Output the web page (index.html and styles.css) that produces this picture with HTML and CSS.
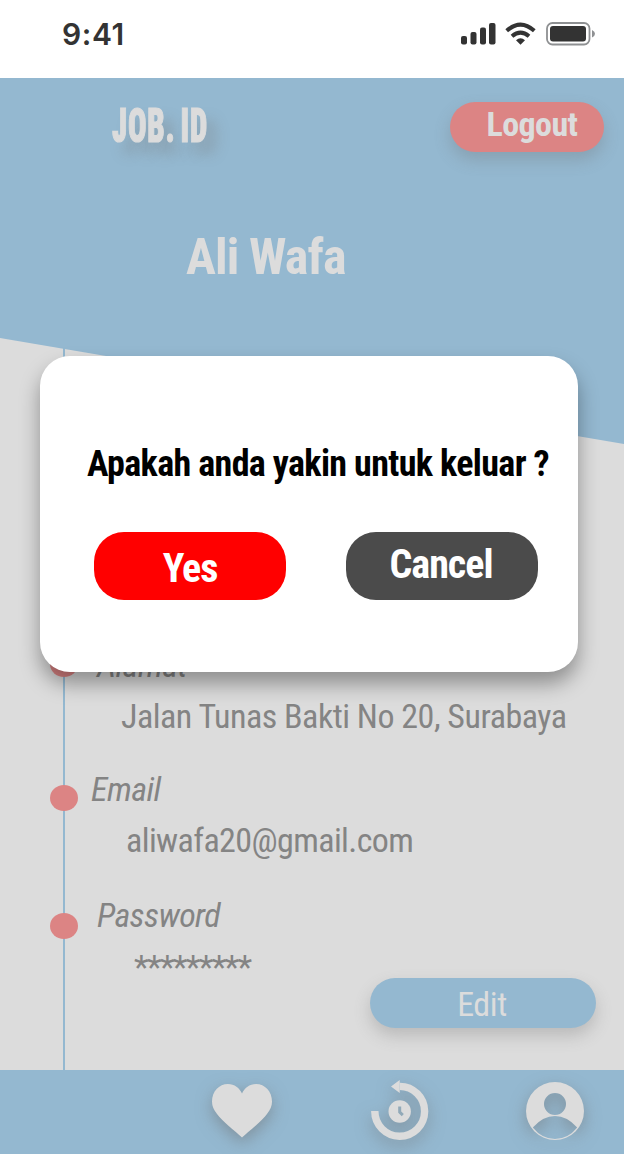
FILE: index.html
```html
<!DOCTYPE html>
<html lang="id">
<head>
<meta charset="utf-8">
<title>JOB.ID</title>
<link rel="stylesheet" href="styles.css">
</head>
<body>
<div class="phone">
  <div class="status">
    <span class="clock">9:41</span>
    <svg class="status-icons" width="136" height="24" viewBox="0 0 136 24">
      <g fill="#333">
        <rect x="1" y="14" width="6" height="8.500" rx="2"/>
        <rect x="10.500" y="10" width="6" height="12.500" rx="2"/>
        <rect x="20" y="5.500" width="6" height="17" rx="2"/>
        <rect x="29" y="1" width="6.500" height="21.500" rx="2"/>
        <path d="M60.500 22.800L56 18.200Q60.500 14.200 65 18.200Z"/>
        <rect x="90" y="4" width="36" height="15.500" rx="3"/>
      </g>
      <g fill="none" stroke="#333" stroke-width="4">
        <path d="M46.700 8.800Q60.500-3.500 74.300 8.800"/>
        <path d="M52 14.300Q60.500 7 69 14.300"/>
      </g>
      <rect x="87" y="1" width="42.500" height="21.500" rx="5.500" fill="none" stroke="#8e9092" stroke-width="1.800"/>
      <path d="M132 8Q135 9.500 135 11.800T132 15.500Z" fill="#8e9092"/>
    </svg>
  </div>

  <main class="profile">
    <header class="hero">
      <div class="hero-bar">
        <span class="logo"><span class="logo-text">JOB. ID</span></span>
        <button class="btn logout">Logout</button>
      </div>
      <h1 class="name">Ali Wafa</h1>
    </header>

    <dl class="timeline">
      <div class="item address"><dt>Alamat</dt><dd>Jalan Tunas Bakti No 20, Surabaya</dd></div>
      <div class="item email"><dt>Email</dt><dd>aliwafa20@gmail.com</dd></div>
      <div class="item password"><dt>Password</dt><dd>*********</dd></div>
    </dl>
    <div class="actions"><button class="btn edit">Edit</button></div>
  </main>

  <nav class="tabs">
    <svg class="tab" width="60" height="54" viewBox="0 0 60 54"><path fill="#dcdcdc" d="M30 53.500C22 46 11 38 5 30C1.500 25.500 0 22 0 17.500C0 7.500 7 0 16 0C22.500 0 27.500 4 30 9.500C32.500 4 37.500 0 44 0C53 0 60 7.500 60 17.500C60 22 58.500 25.500 55 30C49 38 38 46 30 53.500Z"/></svg>
    <svg class="tab" width="58" height="60" viewBox="0 0 58 60">
      <path d="M3.800 31A24.900 24.900 0 1 0 28.700 6.400" fill="none" stroke="#dcdcdc" stroke-width="7.400"/>
      <path d="M20 6.500L28.700 0V13Z" fill="#dcdcdc"/>
      <circle cx="28.700" cy="31.500" r="11.200" fill="#dcdcdc"/>
      <path d="M28.700 26.500V32.200L31.800 35.200" fill="none" stroke="#91a9b8" stroke-width="3"/>
    </svg>
    <svg class="tab" width="58" height="58" viewBox="0 0 58 58"><path fill="#dcdcdc" fill-rule="evenodd" d="M29 0A29 29 0 1 1 29 58A29 29 0 1 1 29 0ZM29 11A11 11 0 1 0 29 33A11 11 0 1 0 29 11ZM6.800 45.500Q17 34 29 34T51.200 45.500Q42 57 29 57T6.800 45.500Z"/></svg>
  </nav>

  <div class="dialog" role="dialog">
    <p class="question">Apakah anda yakin untuk keluar ?</p>
    <div class="choices">
      <button class="btn choice yes">Yes</button>
      <button class="btn choice cancel">Cancel</button>
    </div>
  </div>
</div>
</body>
</html>
```
FILE: styles.css
```css
* { box-sizing: border-box; }
body { margin: 0; background: #fff; }
.phone {
  position: relative;
  display: flex;
  flex-direction: column;
  width: 624px;
  height: 1154px;
  overflow: hidden;
  font-family: "Roboto Condensed", Roboto, sans-serif;
  font-stretch: 75%;
  white-space: nowrap;
}
.status {
  display: flex;
  justify-content: space-between;
  height: 78px;
  padding: 14px 28px 0 62px;
}
.clock { font: 600 30px/40px Inter, sans-serif; color: #333; letter-spacing: 0.6px; }
.status-icons { margin-top: 8px; }

.profile { height: 992px; background: #dcdcdc; }
.hero {
  position: relative;
  z-index: 1;
  height: 366px;
  padding-top: 24px;
  background: #94b8d0;
  clip-path: polygon(0 0, 100% 0, 100% 100%, 0 260px);
}
.hero-bar {
  display: flex;
  justify-content: space-between;
  padding: 0 20px 0 112px;
}
.logo { width: 94px; height: 50px; }
.logo-text {
  display: block;
  width: max-content;
  font-size: 48px;
  font-weight: 900;
  line-height: 47px;
  color: #dcdcdc;
  -webkit-text-stroke: 1.2px #dcdcdc;
  letter-spacing: 1.2px;
  word-spacing: -4.5px;
  transform: scaleX(0.64);
  transform-origin: 0 0;
  text-shadow: 16px 12px 16px rgba(120, 120, 120, 0.4);
}
.btn {
  margin: 0;
  padding: 0;
  border: 0;
  font-family: inherit;
  font-stretch: inherit;
  color: #dcdcdc;
  box-shadow: 0 8px 16px rgba(110, 110, 110, 0.3);
}
.logout {
  width: 154px;
  height: 50px;
  padding: 0 0 6px 10px;
  border-radius: 25px;
  background: #dc8484;
  font-size: 34px;
  font-weight: 700;
  letter-spacing: -0.6px;
}
.name {
  margin: 76px 0 0 186px;
  font-size: 50px;
  font-weight: 700;
  line-height: 58px;
  letter-spacing: -0.9px;
  color: #dcdcdc;
}

.timeline {
  height: 732px;
  margin: -106px 0 0 63px;
  padding-top: 307px;
  border-left: 2px solid #94b8d0;
  font-size: 34px;
  line-height: 40px;
  letter-spacing: -0.5px;
  color: #848484;
}
.item { position: relative; height: 124px; }
.item::before {
  content: "";
  position: absolute;
  left: -15px;
  top: 16px;
  width: 28px;
  height: 26px;
  border-radius: 50%;
  background: #dc8484;
}
.item dt { padding-left: 32px; font-style: italic; }
.item dd { margin: 11px 0 0; padding-left: 56px; }
.address::before { top: 6px; }
.email { height: 126px; }
.email dt { padding-left: 26px; }
.email dd { padding-left: 61px; letter-spacing: -0.6px; }
.password::before { top: 18px; }
.password dt { letter-spacing: -0.65px; }
.password dd { padding-left: 69px; margin-top: 12px; letter-spacing: -1.7px; }
.actions { display: flex; justify-content: flex-end; margin-top: -92px; padding-right: 28px; position: relative; }
.edit {
  width: 226px;
  height: 50px;
  padding: 2px 2px 0 0;
  border-radius: 25px;
  background: #94b8d0;
  font-size: 34px;
  letter-spacing: -0.4px;
}

.tabs {
  position: relative;
  display: flex;
  align-items: flex-start;
  gap: 97px;
  height: 84px;
  padding: 10px 0 0 212px;
  background: #94b8d0;
}
.tab { filter: drop-shadow(0 6px 8px rgba(110, 110, 110, 0.5)); }
.tab:first-child { margin: 4px 2px 0 0; }
.tab:last-child { margin-top: 2px; }

.dialog {
  position: absolute;
  z-index: 2;
  left: 40px;
  top: 356px;
  width: 538px;
  height: 316px;
  padding: 84px 40px 0 47px;
  border-radius: 30px;
  background: #fff;
  box-shadow: 0 12px 20px rgba(0, 0, 0, 0.35);
}
.question { margin: 0; font-size: 36px; font-weight: 700; line-height: 48px; letter-spacing: -0.63px; }
.choices { display: flex; justify-content: space-between; margin-top: 44px; padding-left: 7px; }
.choice { width: 192px; height: 68px; border-radius: 30px; color: #fff; font-size: 40px; font-weight: 700; letter-spacing: -1px; box-shadow: none; }
.yes { background: #f00; padding-top: 5px; }
.cancel { background: #4b4b4b; padding: 0 2px 4px 0; }
```
